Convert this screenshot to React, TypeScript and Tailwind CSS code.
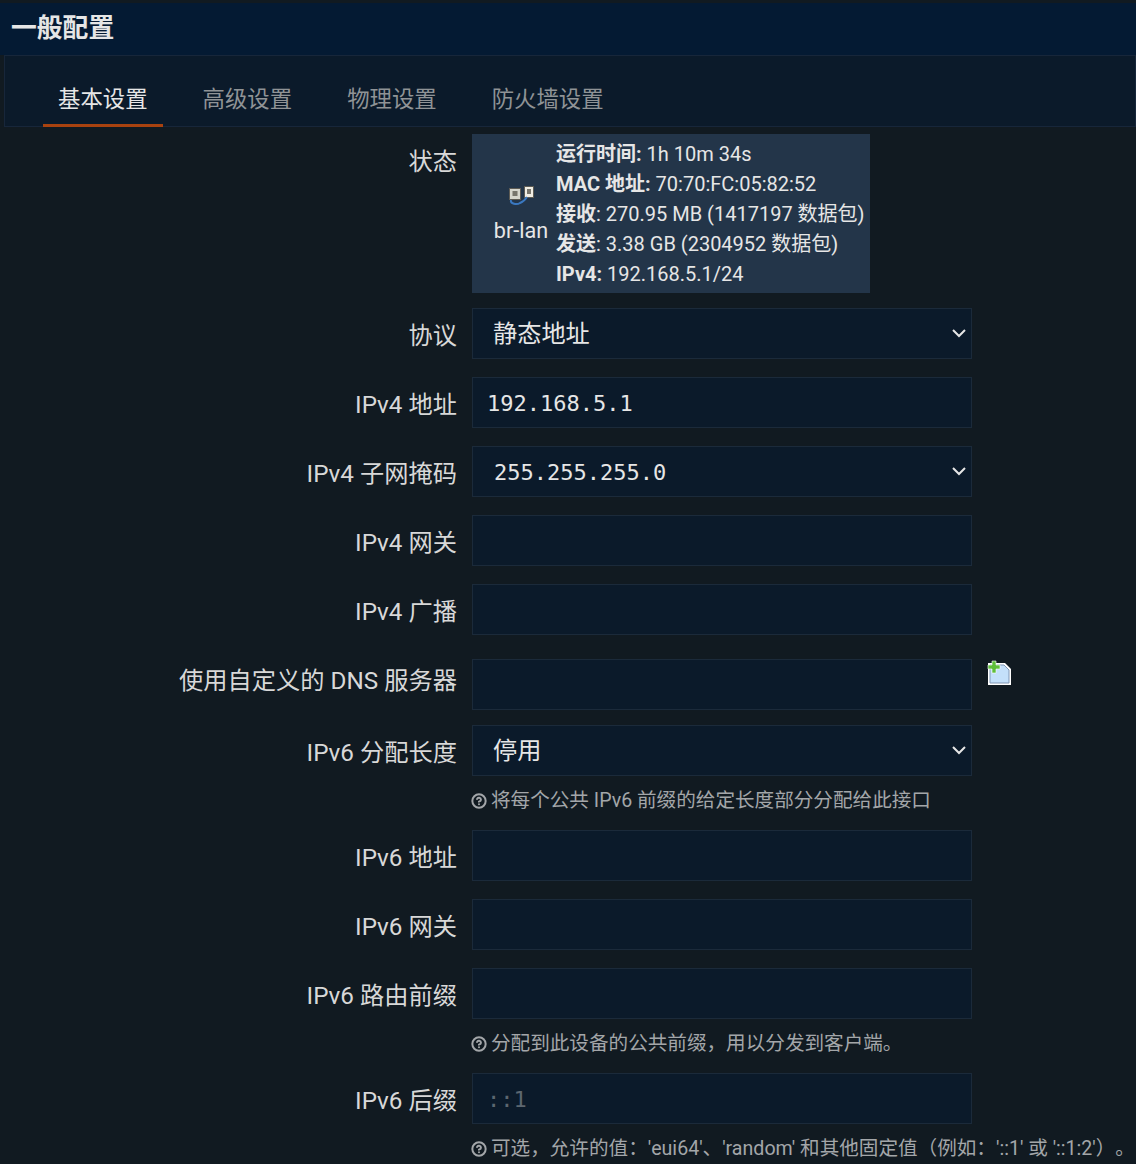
import { CircleHelp } from "lucide-react";

const cjk = "font-['Roboto','Noto_Sans_CJK_SC',sans-serif]";
const mono = "font-['DejaVu_Sans_Mono','Noto_Sans_CJK_SC',monospace]";

function Row({ label, className = "", children }: { label: string; className?: string; children: React.ReactNode }) {
  return (
    <div className={`flex ${className}`}>
      <div className="w-[457px] shrink-0 pt-[10px] text-right text-[24.25px] leading-[36px] text-[#d8d8d8]">{label}</div>
      <div className="ml-[15px] w-[500px] shrink-0">{children}</div>
    </div>
  );
}

function Chevron() {
  return (
    <svg className="absolute right-[5px] top-[16px] size-[16px]" viewBox="0 0 16 16" fill="none" stroke="#e6e6e6" strokeWidth="2">
      <path d="M3 5l6 6 6-6" />
    </svg>
  );
}

function Field({ value, placeholder, select, mono: isMono }: { value?: string; placeholder?: string; select?: boolean; mono?: boolean }) {
  const text = isMono ? `text-[22px] ${mono}` : "text-[24.2px]";
  const pad = select ? (isMono ? "pl-[21px]" : "pl-[20px]") : "pl-[14px]";
  return (
    <div className={`relative h-[51px] border border-[#1b2a3a] bg-[#0b1a2a] leading-[51px] text-[#e6e6e6] ${text} ${pad}`}>
      {value}
      {placeholder && <span className="text-[#5d6770]">{placeholder}</span>}
      {select && <Chevron />}
    </div>
  );
}

function Help({ children }: { children: React.ReactNode }) {
  return (
    <div className="ml-[-1px] mt-[12px] flex h-[25px] items-center whitespace-nowrap text-[19.6px] leading-[26px] text-[#a3a6a9] [text-spacing-trim:space-all]">
      <CircleHelp className="mr-[4px] size-[16px] shrink-0" strokeWidth={3} />
      <span>{children}</span>
    </div>
  );
}

function BridgeIcon() {
  return (
    <svg className="h-[20px] w-[26px]" viewBox="0 0 26 20" fill="none">
      <rect x="1.5" y="2.5" width="11" height="11" fill="#d6d6cd" stroke="#5d5b54" />
      <rect x="16.5" y="0.5" width="9" height="11" fill="#f0ede3" stroke="#5d5b54" />
      <rect x="4.5" y="5" width="5" height="5" fill="#77756c" />
      <rect x="19" y="3" width="4" height="5" fill="#77756c" />
      <path d="M3 14c-1 4 6 5 9 3 3-1 5-3 7-6" stroke="#3a78c0" strokeWidth="2" />
    </svg>
  );
}

function AddIcon() {
  return (
    <svg className="h-[26px] w-[25px]" viewBox="0 0 25 26">
      <path d="M1 3h17l6 6v16H1z" fill="#ffffff" />
      <path d="M3 5h14l5 5v13H3z" fill="#c4e0fa" stroke="#8197b4" />
      <path d="M5 1h4v4h4v4H9v4H5V9H1V5h4z" fill="#5fbe3a" stroke="#ffffff" strokeWidth="0.6" />
    </svg>
  );
}

const tabs = ["基本设置", "高级设置", "物理设置", "防火墙设置"];

export default function App() {
  return (
    <div className={`h-[1164px] w-[1136px] overflow-hidden bg-[#111a21] pt-[3px] ${cjk}`}>
      <div className="h-[52px] bg-[#041a33] pl-[11px] text-[25.8px] font-bold leading-[51px] text-[#e6e6e6]">一般配置</div>

      <div className="ml-[4px] flex h-[72px] border border-[#17263a] bg-[#0b1a2a] pl-[38px] pt-[19px]">
        {tabs.map((tab, i) => (
          <div
            key={tab}
            className={`mr-[25px] h-[52px] border-b-[3px] px-[15px] text-[22.4px] leading-[48px] ${
              i === 0 ? "border-[#a8420f] text-[#e6e6e6]" : "border-transparent text-[#8f9396]"
            }`}
          >
            {tab}
          </div>
        ))}
      </div>

      <Row label="状态" className="mt-[7px]">
        <div className="flex h-[159px] w-[398px] items-center bg-[#233549] text-[#e6e6e6]">
          <div className="flex w-[84px] shrink-0 flex-col items-center pl-[14px] pt-[3px] text-[21.6px] leading-[28px]">
            <BridgeIcon />
            <span className="mt-[11px]">br-lan</span>
          </div>
          <div className="whitespace-nowrap pt-[1px] text-[20px] leading-[30px]">
            <div><b>运行时间:</b> 1h 10m 34s</div>
            <div><b>MAC 地址:</b> 70:70:FC:05:82:52</div>
            <div><b>接收</b>: 270.95 MB (1417197 数据包)</div>
            <div><b>发送</b>: 3.38 GB (2304952 数据包)</div>
            <div><b>IPv4:</b> 192.168.5.1/24</div>
          </div>
        </div>
      </Row>

      <Row label="协议" className="mt-[15px]"><Field value="静态地址" select /></Row>
      <Row label="IPv4 地址" className="mt-[18px]"><Field value="192.168.5.1" mono /></Row>
      <Row label="IPv4 子网掩码" className="mt-[18px]"><Field value="255.255.255.0" select mono /></Row>
      <Row label="IPv4 网关" className="mt-[18px]"><Field /></Row>
      <Row label="IPv4 广播" className="mt-[18px]"><Field /></Row>

      <div className="relative">
        <Row label="使用自定义的 DNS 服务器" className="mt-[24px] [&>div:first-child]:pt-[4px]"><Field /></Row>
        <div className="absolute left-[987px] top-[1px]"><AddIcon /></div>
      </div>

      <Row label="IPv6 分配长度" className="mt-[15px]">
        <Field value="停用" select />
        <Help>将每个公共 IPv6 前缀的给定长度部分分配给此接口</Help>
      </Row>
      <Row label="IPv6 地址" className="mt-[17px]"><Field /></Row>
      <Row label="IPv6 网关" className="mt-[18px]"><Field /></Row>
      <Row label="IPv6 路由前缀" className="mt-[18px]">
        <Field />
        <Help>分配到此设备的公共前缀，用以分发到客户端。</Help>
      </Row>
      <Row label="IPv6 后缀" className="mt-[17px]">
        <Field placeholder="::1" mono />
        <Help>可选，允许的值：'eui64'、'random' 和其他固定值（例如：'::1' 或 '::1:2'）。</Help>
      </Row>
    </div>
  );
}
